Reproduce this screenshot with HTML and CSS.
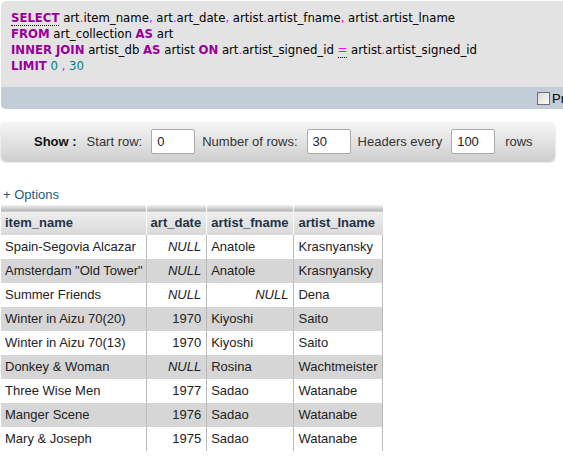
FILE: index.html
```html
<!DOCTYPE html>
<html lang="en">
<head>
  <meta charset="UTF-8">
  <title>art_collection - query</title>
  <link rel="stylesheet" href="styles.css">
</head>
<body>
  <div class="page">
    <div class="sql-box">
      <div class="sql-code">
        <div><a class="kw doc">SELECT</a> art<span class="p">.</span>item_name<span class="p">,</span> art<span class="p">.</span>art_date<span class="p">,</span> artist<span class="p">.</span>artist_fname<span class="p">,</span> artist<span class="p">.</span>artist_lname</div>
        <div><span class="kw">FROM</span> art_collection <span class="kw">AS</span> art</div>
        <div><span class="kw">INNER JOIN</span> artist_db <span class="kw">AS</span> artist <span class="kw">ON</span> art<span class="p">.</span>artist_signed_id <span class="p eq">=</span> artist<span class="p">.</span>artist_signed_id</div>
        <div><span class="kw">LIMIT</span> <span class="num">0</span> <span class="p">,</span> <span class="num">30</span></div>
      </div>
      <div class="sql-tools">
        <label class="profiling"><span class="check"></span>Profiling</label>
      </div>
    </div>

    <form class="nav-bar">
      <b class="show">Show :</b>
      <span class="lbl">Start row:</span>
      <input class="num-input" type="text" value="0">
      <span class="lbl">Number of rows:</span>
      <input class="num-input" type="text" value="30">
      <span class="lbl">Headers every</span>
      <input class="num-input" type="text" value="100">
      <span class="lbl">rows</span>
    </form>

    <a class="options" href="#">+ Options</a>

    <table class="data">
      <thead>
        <tr>
          <th>item_name</th>
          <th>art_date</th>
          <th>artist_fname</th>
          <th>artist_lname</th>
        </tr>
      </thead>
      <tbody>
        <tr><td>Spain-Segovia Alcazar</td><td class="r"><i>NULL</i></td><td>Anatole</td><td>Krasnyansky</td></tr>
        <tr><td>Amsterdam "Old Tower"</td><td class="r"><i>NULL</i></td><td>Anatole</td><td>Krasnyansky</td></tr>
        <tr><td>Summer Friends</td><td class="r"><i>NULL</i></td><td class="r"><i>NULL</i></td><td>Dena</td></tr>
        <tr><td>Winter in Aizu 70(20)</td><td class="r">1970</td><td>Kiyoshi</td><td>Saito</td></tr>
        <tr><td>Winter in Aizu 70(13)</td><td class="r">1970</td><td>Kiyoshi</td><td>Saito</td></tr>
        <tr><td>Donkey &amp; Woman</td><td class="r"><i>NULL</i></td><td>Rosina</td><td>Wachtmeister</td></tr>
        <tr><td>Three Wise Men</td><td class="r">1977</td><td>Sadao</td><td>Watanabe</td></tr>
        <tr><td>Manger Scene</td><td class="r">1976</td><td>Sadao</td><td>Watanabe</td></tr>
        <tr><td>Mary &amp; Joseph</td><td class="r">1975</td><td>Sadao</td><td>Watanabe</td></tr>
      </tbody>
    </table>
  </div>
</body>
</html>
```

FILE: styles.css
```css
*{ box-sizing: border-box; }
html, body{ overflow: hidden; }
body{ margin: 0; background: #fff; color: #222;
      font-family: "Liberation Sans", Arial, sans-serif; font-size: 13px; }

.page{ width: 620px; padding: 1px 0 0 1px; }

/* sql query box */
.sql-box{ background: #e3e3e3; border-radius: 5px; overflow: hidden; }
.sql-code{ padding: 9px 10px 13px;
      font-family: "DejaVu Sans Condensed", "DejaVu Sans", sans-serif;
      font-size: 13px; line-height: 16px; color: #000; }
.sql-code .kw{ color: #990099; font-weight: bold; }
.sql-code .doc{ border-bottom: 1px dotted #000; }
.sql-code .p{ color: #ff00ff; }
.sql-code .eq{ border-bottom: 1px dotted #000; }
.sql-code .num{ color: #008080; }

.sql-tools{ background: #c2cdd7; height: 22px; padding-top: 5px; text-align: right; }
.profiling{ display: inline-flex; align-items: center; gap: 2px; margin-right: 21px;
      font-size: 13px; line-height: 13px; color: #000; }
.check{ width: 13px; height: 13px; border: 1px solid #6f6f6f;
      background: linear-gradient(135deg, #d8d8d8, #fbfbfb); }

/* navigation bar */
.nav-bar{ display: flex; align-items: center; width: 554px; height: 39px;
      margin-top: 13px; padding-left: 33px;
      background: linear-gradient(#f6f6f6, #cfcfcf);
      border-radius: 5px; box-shadow: 0 1px 2px #bbb; color: #333; }
.nav-bar .show{ color: #111; margin-right: 10px; }
.nav-bar .lbl{ margin-right: 9px; }
.num-input{ width: 44px; height: 25px; margin: 0 7px 0 0; padding: 0 5px;
      border: 1px solid #aaa; border-radius: 2px; background: #fff;
      font: 13px "Liberation Sans", Arial, sans-serif; color: #222; }
.nav-bar .lbl:last-child{ margin-left: 3px; }

.options{ display: block; margin: 26px 0 0 2px; line-height: 16px;
      color: #235a81; text-decoration: none; }

/* result table */
.data{ border-collapse: collapse; margin-top: 2px; }
.data th{ padding: 10px 5px 4px 4px; line-height: 16px; text-align: left;
      color: #1e3347; font-weight: bold; white-space: nowrap;
      border-right: 1px solid #fff;
      background: linear-gradient(#f3f3f3 0, #b5b5b5 6px, #eeeeee 7px, #d9d9d9 100%); }
.data th:last-child{ border-right: 0; }
.data td{ padding: 4px 5px 4px 4px; line-height: 16px; white-space: nowrap;
      border-right: 1px solid #b9b9b9; color: #222; }
.data td:first-child, .data th:first-child{ padding-right: 3px; }
.data tbody tr:nth-child(even){ background: #d6d6d6; }
.data td.r{ text-align: right; }
```
